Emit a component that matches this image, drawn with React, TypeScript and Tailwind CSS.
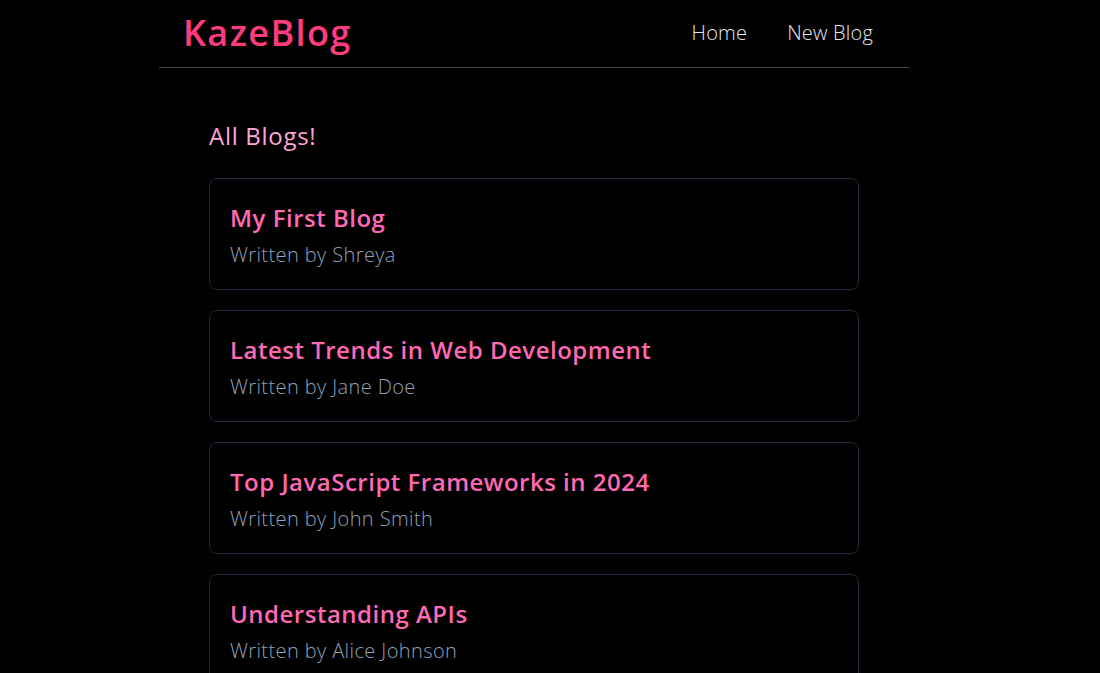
import React from 'react';

type Blog = { id: number; title: string; author: string };

const blogs: Blog[] = [
    { id: 1, title: 'My First Blog', author: 'Shreya' },
    { id: 2, title: 'Latest Trends in Web Development', author: 'Jane Doe' },
    { id: 3, title: 'Top JavaScript Frameworks in 2024', author: 'John Smith' },
    { id: 4, title: 'Understanding APIs', author: 'Alice Johnson' },
];

const App: React.FC = () => {
    return (
        <div className="bg-black min-h-screen font-['Open_Sans','Noto_Sans',sans-serif]">
            <div className="w-[1068px]">
                <nav className="w-[750px] mx-auto h-[68px] flex items-center justify-between pl-[24px] pr-[36px] border-b border-[#4a4a4a]">
                    <h1 className="text-[36px] font-semibold text-[#ff3b7f] leading-none tracking-[1.4px] -mt-[2px]">KazeBlog</h1>
                    <div className="flex gap-[40px] text-[20px] font-light text-gray-200 tracking-[0.2px] -mt-[2px]">
                        <a href="#">Home</a>
                        <a href="#">New Blog</a>
                    </div>
                </nav>

                <div className="w-[650px] mx-auto pt-[53px]">
                    <h2 className="text-[24px] text-pink-300 mb-[27px] leading-tight tracking-[0.7px]">All Blogs!</h2>
                    <div className="flex flex-col gap-[20px]">
                        {blogs.map((blog) => (
                            <div key={blog.id} className="border border-slate-800 rounded-lg px-[20px] pt-[23px] pb-[20px]">
                                <h3 className="text-[24px] font-semibold text-[#ff69b4] leading-[32px] tracking-[0.5px]">{blog.title}</h3>
                                <p className="text-[20px] font-light text-slate-400 mt-[7px] leading-[28px] tracking-[0.4px]">Written by {blog.author}</p>
                            </div>
                        ))}
                    </div>
                </div>
            </div>
        </div>
    );
};

export default App;
